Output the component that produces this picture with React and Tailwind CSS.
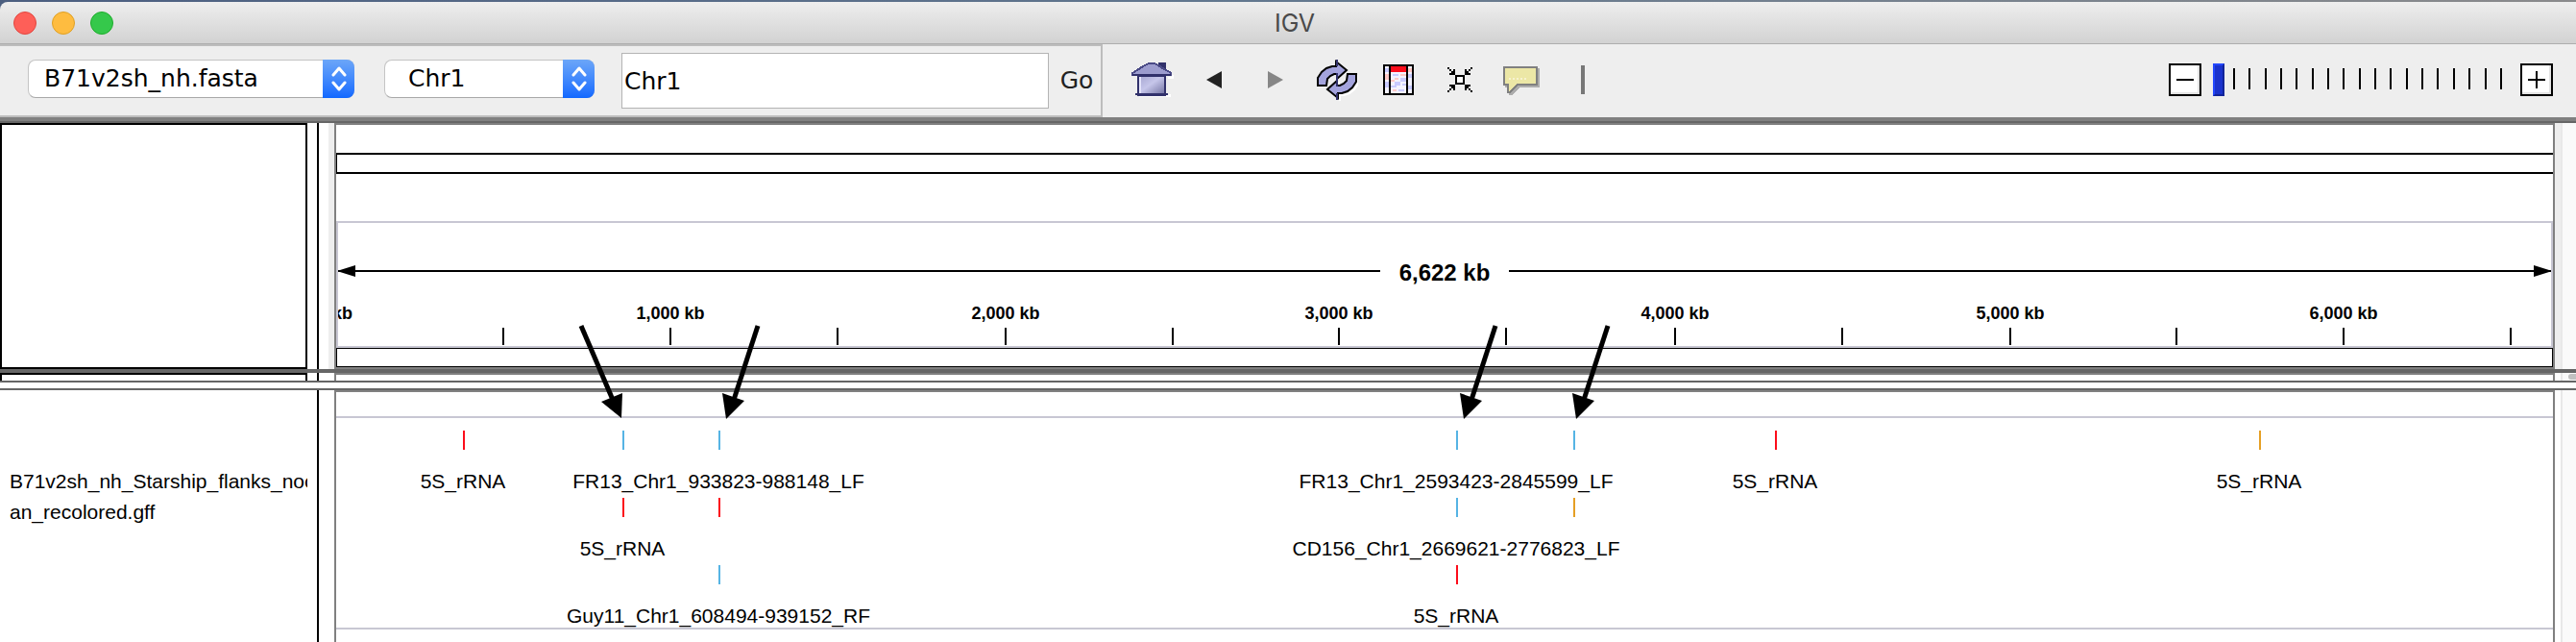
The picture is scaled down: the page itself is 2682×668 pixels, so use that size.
import React from "react";

const TRACK_SPAN = 2308;
const RULER_SPAN = 2304;
const pct = (x, span = TRACK_SPAN) => `${(x / span) * 100}%`;

const rulerMarks = [
  { x: -3, label: "0 kb", bare: true },
  { x: 172 },
  { x: 346, label: "1,000 kb" },
  { x: 520 },
  { x: 695, label: "2,000 kb" },
  { x: 869 },
  { x: 1042, label: "3,000 kb" },
  { x: 1216 },
  { x: 1392, label: "4,000 kb" },
  { x: 1566 },
  { x: 1741, label: "5,000 kb" },
  { x: 1914 },
  { x: 2088, label: "6,000 kb" },
  { x: 2262 },
];

const RED = "bg-[#fc0d1b]";
const BLUE = "bg-[#56b4e4]";
const ORANGE = "bg-[#e59f24]";

const featureRows = [
  [
    { x: 133, color: RED, label: "5S_rRNA" },
    { x: 299, color: BLUE },
    { x: 399, color: BLUE, label: "FR13_Chr1_933823-988148_LF" },
    { x: 1167, color: BLUE, label: "FR13_Chr1_2593423-2845599_LF" },
    { x: 1289, color: BLUE },
    { x: 1499, color: RED, label: "5S_rRNA" },
    { x: 2003, color: ORANGE, label: "5S_rRNA" },
  ],
  [
    { x: 299, color: RED, label: "5S_rRNA" },
    { x: 399, color: RED },
    { x: 1167, color: BLUE, label: "CD156_Chr1_2669621-2776823_LF" },
    { x: 1289, color: ORANGE },
  ],
  [
    { x: 399, color: BLUE, label: "Guy11_Chr1_608494-939152_RF" },
    { x: 1167, color: RED, label: "5S_rRNA" },
  ],
];

const pointers = [
  { x: 297, fromLeft: true },
  { x: 406 },
  { x: 1174 },
  { x: 1291 },
];

function Dropdown({ id, label, value, className }) {
  return (
    <div className={`relative mb-1 shrink-0 ${className}`}>
      <select
        id={id}
        aria-label={label}
        defaultValue={value}
        className="h-10 w-full appearance-none rounded-lg border border-[#c4c4c4] border-b-[#a8a8a8] bg-white pr-9 pl-4 font-['DejaVu_Sans',sans-serif] text-[25px] leading-8 text-black"
      >
        <option>{value}</option>
      </select>
      <span className="pointer-events-none absolute inset-y-0 right-0 flex w-[33px] items-center justify-center rounded-r-lg bg-linear-to-b from-[#6ca6f8] to-[#1068ff]">
        <svg width="18" height="26" viewBox="0 0 18 26" fill="none" stroke="#fff" strokeWidth="3" strokeLinecap="round" strokeLinejoin="round">
          <path d="M3 9l6-7 6 7M3 17l6 7 6-7" />
        </svg>
      </span>
    </div>
  );
}

function HomeIcon() {
  return (
    <svg width="44" height="36" viewBox="0 0 44 36" shapeRendering="crispEdges">
      <defs>
        <linearGradient id="wall" x1="0" y1="0" x2="1" y2="1">
          <stop offset="0" stopColor="#a4a4d0" />
          <stop offset="0.45" stopColor="#c6c6ea" />
          <stop offset="1" stopColor="#6c6c9c" />
        </linearGradient>
      </defs>
      <path d="M8 35H40V33M38 16H43V13" fill="none" stroke="#fff" strokeWidth="2" />
      <path d="M28 0h8v10h-8z" fill="#31316b" />
      <path d="M7 14h28v20H7z" fill="url(#wall)" stroke="#31316b" strokeWidth="2" />
      <path d="M9 15v17" stroke="#e4e4fa" strokeWidth="2" />
      <path d="M18 1h6l4 2 6 4 6 3 1 1v2H1v-2l5-3 6-4z" fill="#9c9cce" stroke="#4a4a86" strokeWidth="2" />
      <path d="M1 13h40M4 33h34" stroke="#31316b" strokeWidth="2" />
    </svg>
  );
}

const loopArrow =
  "M1 27V19L5 13L10 9L16 7H20V2L31 11L21 20V15H18L14 17L11 20L10 27Z";

function RefreshIcon() {
  return (
    <svg width="44" height="44" viewBox="0 0 44 44">
      <path d={loopArrow} transform="translate(3 3) rotate(180 21 21)" fill="none" stroke="#fff" strokeWidth="2" />
      <g transform="translate(1 1)">
        <g fill="#a3a3dc" stroke="#000" strokeWidth="2">
          <path d={loopArrow} />
          <path d={loopArrow} transform="rotate(180 21 21)" />
        </g>
        <path d="M21 0v7M21 14v14M21 35v7" stroke="#31316b" strokeWidth="2" />
      </g>
    </svg>
  );
}

function RegionIcon() {
  return (
    <svg width="32" height="32" viewBox="0 0 32 32" shapeRendering="crispEdges">
      <path d="M1 1h30v30H1z" fill="#f4f3ff" />
      <path d="M2 4h4v4H2zM10 10h6v2h-6zM12 18h6v4h-6zM8 22h6v2H8zM18 14h6v4h-6zM16 26h6v2h-6zM26 10h4v4h-4zM26 22h4v4h-4zM2 18h4v6H2zM20 20h4v2h-4z" fill="#c9cbff" />
      <path d="M2 10h4v6H2zM18 10h6v2h-6zM12 14h4v2h-4zM8 16h4v2H8zM26 4h4v4h-4zM10 26h4v2h-4z" fill="#ffc9c6" />
      <path d="M8 2h16v6H8z" fill="#fc0d1b" />
      <path d="M1 1h30v30H1zM7 1v30M25 1v30" fill="none" stroke="#000" strokeWidth="2" />
    </svg>
  );
}

const cornerMark = "M0 0h2v2h2v2h2v-2h2v6h-6v-2h2v-2h-2v-2h-2z";

function CollapseIcon() {
  return (
    <svg width="26" height="26" viewBox="0 0 26 26" shapeRendering="crispEdges">
      <path d="M9 9h8v8H9z" fill="#fff" stroke="#000" strokeWidth="2" />
      <path d={cornerMark} />
      <path d={cornerMark} transform="rotate(90 13 13)" />
      <path d={cornerMark} transform="rotate(180 13 13)" />
      <path d={cornerMark} transform="rotate(270 13 13)" />
    </svg>
  );
}

const bubble = "M1 1H35V19H15L13 21L7 27H5V19H1Z";

function BubbleIcon() {
  return (
    <svg width="38" height="32" viewBox="0 0 38 32" shapeRendering="crispEdges" className="mt-1">
      <path d={bubble} transform="translate(2 2)" fill="#acacac" stroke="#acacac" strokeWidth="2" />
      <path d={bubble} fill="#ece7a6" stroke="#808080" strokeWidth="2" />
      <path d="M6 13h20" stroke="#f7f2d0" strokeWidth="2" strokeDasharray="2 2" />
    </svg>
  );
}

const tools = [
  { name: "Home", icon: <HomeIcon /> },
  {
    name: "Back",
    icon: (
      <svg width="16" height="18" viewBox="0 0 16 18"><path d="M16 0v18L0 9z" fill="#222" /></svg>
    ),
  },
  {
    name: "Forward",
    icon: (
      <svg width="16" height="18" viewBox="0 0 16 18"><path d="M0 0v18l16-9z" fill="#868686" /></svg>
    ),
  },
  { name: "Refresh", icon: <RefreshIcon /> },
  { name: "Region of interest", icon: <RegionIcon /> },
  { name: "Fit data to window", icon: <CollapseIcon /> },
  { name: "Popup text behavior", icon: <BubbleIcon /> },
];

function ZoomButton({ name, children }) {
  return (
    <button aria-label={name} className="flex size-[34px] shrink-0 items-center justify-center border-2 border-black bg-white shadow-[inset_-2px_-2px_0_#e4e4e4]">
      <svg width="18" height="18" viewBox="0 0 18 18" shapeRendering="crispEdges" stroke="#000" strokeWidth="2">
        {children}
      </svg>
    </button>
  );
}

function Toolbar() {
  return (
    <div className="flex h-[76px] shrink-0 bg-[#eee]">
      <div className="flex w-[1148px] shrink-0 items-center border-y-2 border-r-2 border-[#bdbdbd] pl-[29px]">
        <Dropdown id="genome" label="Genome" value="B71v2sh_nh.fasta" className="mr-[31px] w-[340px]" />
        <Dropdown id="chromosome" label="Chromosome" value="Chr1" className="mr-7 w-[219px] [&_select]:pl-6" />
        <input
          id="locus"
          aria-label="Locus"
          defaultValue="Chr1"
          className="h-[58px] min-w-0 flex-1 border border-[#b4b4b4] bg-white px-[2px] font-['DejaVu_Sans',sans-serif] text-[25px] text-black"
        />
        <button className="w-[54px] pl-1 text-center font-['DejaVu_Sans',sans-serif] text-[25px] leading-8 text-[#222]">Go</button>
      </div>
      <div className="flex items-center pb-[2px] pl-5">
        {tools.map((t) => (
          <button key={t.name} aria-label={t.name} className="flex h-16 w-16 items-center justify-center">
            {t.icon}
          </button>
        ))}
        <span className="flex w-16 justify-center"><span className="h-[30px] w-1 bg-[#777]" /></span>
      </div>
      <div className="ml-auto flex items-center pr-6 pb-[2px]">
        <ZoomButton name="Zoom out"><path d="M0 9h18" /></ZoomButton>
        <div className="mr-[13px] ml-3 grid w-[307px] items-center">
          <div className="col-start-1 row-start-1 flex justify-between pr-[6px] pb-[2px] pl-[21px]">
            {Array.from({ length: 18 }, (_, i) => (
              <span key={i} className="h-[22px] w-[2px] bg-black" />
            ))}
          </div>
          <input
            id="zoom"
            aria-label="Zoom level"
            type="range"
            min="0"
            max="18"
            defaultValue="0"
            className="z-10 col-start-1 row-start-1 m-0 h-[34px] w-full appearance-none bg-transparent [&::-webkit-slider-thumb]:h-[34px] [&::-webkit-slider-thumb]:w-3 [&::-webkit-slider-thumb]:appearance-none [&::-webkit-slider-thumb]:rounded-none [&::-webkit-slider-thumb]:border-2 [&::-webkit-slider-thumb]:border-t-[#2448ff] [&::-webkit-slider-thumb]:border-r-[#12249a] [&::-webkit-slider-thumb]:border-b-[#12249a] [&::-webkit-slider-thumb]:border-l-[#2448ff] [&::-webkit-slider-thumb]:bg-[#1a32cc]"
          />
        </div>
        <ZoomButton name="Zoom in"><path d="M0 9h18M9 0v18" /></ZoomButton>
      </div>
    </div>
  );
}

function Gutter({ shaded, children }) {
  return (
    <div className={`flex w-[22px] shrink-0 ${shaded ? "bg-[#eee]" : "bg-white"}`}>
      <div className="ml-[6px] flex-1 overflow-hidden border-l-2 border-[#e8e8e8] bg-[#fafafa]">{children}</div>
    </div>
  );
}

function Side({ boxed, closed, shaded, children }) {
  return (
    <div className="flex w-[348px] shrink-0 bg-white">
      <div className={`w-80 overflow-hidden ${boxed ? "border-2 border-black" : "pr-[2px]"} ${boxed && !closed ? "border-b-0" : ""}`}>
        {children}
      </div>
      <div className="ml-[10px] w-3 border-l-2 border-black" />
      {shaded && <div className="w-[6px] bg-[#eee]" />}
    </div>
  );
}

function Ruler() {
  return (
    <div className="relative h-[132px] overflow-hidden border-2 border-[#c8c7d3]">
      <div className="mt-9 flex h-8 items-center">
        <svg width="18" height="12" viewBox="0 0 18 12" className="-mt-1 shrink-0"><path d="M0 5h2L18 0v12L2 7H0z" /></svg>
        <span className="-mt-1 h-[2px] flex-1 bg-black" />
        <span className="w-[134px] text-center text-[24px] leading-8 font-bold">6,622 kb</span>
        <span className="-mt-1 h-[2px] flex-1 bg-black" />
        <svg width="18" height="12" viewBox="0 0 18 12" className="-mt-1 shrink-0"><path d="M18 5h-2L0 0v12l16-5h2z" /></svg>
      </div>
      {rulerMarks.map((m) => (
        <div key={m.x} className="absolute bottom-px flex w-0 flex-col items-center" style={{ left: pct(m.x, RULER_SPAN) }}>
          {m.label && <span className="mb-[5px] text-[18px] leading-5 font-bold whitespace-nowrap">{m.label}</span>}
          <span className={`h-[18px] w-[2px] shrink-0 ${m.bare ? "bg-transparent" : "bg-black"}`} />
        </div>
      ))}
    </div>
  );
}

function Pointer({ x, fromLeft }) {
  return (
    <svg
      width="100"
      height="104"
      viewBox="0 0 100 104"
      className="absolute top-[206px] -ml-[50px]"
      style={{ left: pct(x) }}
    >
      {fromLeft ? (
        <>
          <path d="M8 5L41 82" stroke="#000" strokeWidth="5" />
          <path d="M50 101L29 84L51 75Z" />
        </>
      ) : (
        <>
          <path d="M83 5L58 82" stroke="#000" strokeWidth="5" />
          <path d="M50 102L46 75L69 83Z" />
        </>
      )}
    </svg>
  );
}

export default function App() {
  return (
    <div className="flex min-h-screen flex-col overflow-hidden bg-white font-['Liberation_Sans',Arial,sans-serif] text-black">
      <div className="flex shrink-0 bg-linear-to-r from-[#4c5f80] via-[#63788f] to-[#8a8a8c] pt-[2px]">
        <header className="flex h-11 flex-1 items-center rounded-tl-lg border-b border-[#adadad] bg-linear-to-b from-[#eee] to-[#d2d2d2] pl-[14px]">
          <div className="flex flex-1 gap-4">
            <button aria-label="Close" className="size-6 rounded-full border border-[#e2463f] bg-[#fe5f58]" />
            <button aria-label="Minimize" className="size-6 rounded-full border border-[#dfa023] bg-[#febc40]" />
            <button aria-label="Zoom" className="size-6 rounded-full border border-[#1dad2b] bg-[#35c84b]" />
          </div>
          <h1 className="pt-px font-['Inter',sans-serif] text-[25px] leading-8 text-[#4a4a4a]">IGV</h1>
          <div className="flex-1" />
        </header>
      </div>
      <Toolbar />
      <div className="h-[6px] shrink-0 border-b-2 border-[#666] bg-[#808080]" />

      <main className="relative flex flex-1 flex-col">
        <section className="flex h-64 shrink-0">
          <Side boxed closed shaded />
          <div className="min-w-0 flex-1 border-2 border-[#808080]">
            <div className="mt-[29px] h-[22px] border-y-2 border-l border-black" />
            <div className="mt-[49px]">
              <Ruler />
            </div>
            <div className="h-5 border border-black" />
          </div>
          <Gutter shaded />
        </section>
        <div className="h-1 shrink-0 bg-[#666]" />
        <section className="flex h-2 shrink-0">
          <Side boxed />
          <div className="flex-1 border-2 border-b-0 border-[#808080]" />
          <Gutter>
            <div className="mt-px ml-[6px] h-[6px] rounded-l-full bg-[#c1c1c1]" />
          </Gutter>
        </section>
        <div className="h-[10px] shrink-0 border-y-2 border-[#666] bg-white" />
        <section className="flex flex-1">
          <Side>
            <p className="pt-[79px] pl-[10px] text-[21px] leading-8 whitespace-nowrap">
              B71v2sh_nh_Starship_flanks_noc
              <br />
              an_recolored.gff
            </p>
          </Side>
          <div className="min-w-0 flex-1 border-2 border-b-0 border-[#808080]">
            <div className="mt-[25px] h-[222px] border-y-2 border-[#c8c7d3] pt-[13px]">
              {featureRows.map((row, i) => (
                <div key={i} className="relative h-[70px]">
                  {row.map((f) => (
                    <div key={f.x} className="absolute flex w-0 flex-col items-center" style={{ left: pct(f.x) }}>
                      <span className={`h-5 w-[2px] shrink-0 ${f.color}`} />
                      {f.label && (
                        <span className="mt-[21px] pr-[2px] text-[21px] leading-6 whitespace-nowrap">{f.label}</span>
                      )}
                    </div>
                  ))}
                </div>
              ))}
            </div>
          </div>
          <Gutter />
        </section>
        <div className="pointer-events-none absolute inset-y-0 right-6 left-[350px]">
          {pointers.map((p) => (
            <Pointer key={p.x} {...p} />
          ))}
        </div>
      </main>
    </div>
  );
}
